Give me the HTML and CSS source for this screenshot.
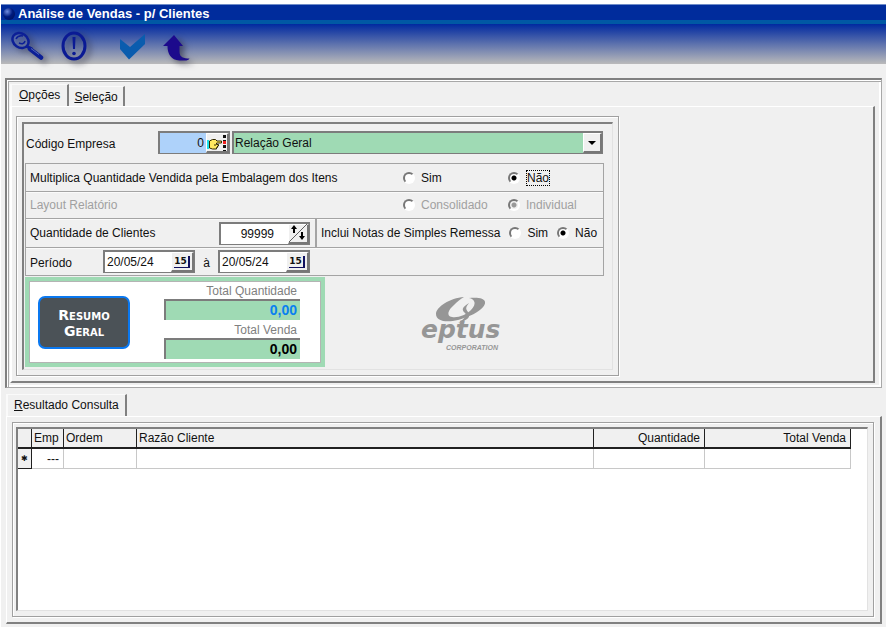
FILE: index.html
```html
<!DOCTYPE html>
<html lang="pt-BR">
<head>
<meta charset="utf-8">
<title>Análise de Vendas - p/ Clientes</title>
<link rel="stylesheet" href="styles.css">
</head>
<body>
<div class="window">
  <header>
    <div class="titlebar">
      <span class="orb"></span>
      <h1>Análise de Vendas - p/ Clientes</h1>
    </div>
    <div class="toolbar">
      <button type="button" class="tool tool-search" aria-label="Pesquisar">
        <svg width="40" height="40" viewBox="0 0 40 40">
          <ellipse cx="9.500" cy="16.500" rx="8.500" ry="7" transform="rotate(35 9.500 16.500)" fill="#8d9ccb" fill-opacity=".25" stroke="#0c1f96" stroke-width="2.500"/>
          <path d="M5 15q2-4 7-3M8 19q5 2 6-2" fill="none" stroke="#0c1f96" stroke-width="1.500"/>
          <path d="M15 22l6 3" fill="none" stroke="#0c1f96" stroke-width="3"/>
          <path d="M19 25l11 8.500" stroke="#0c1f96" stroke-width="4.500" stroke-linecap="round"/>
          <path d="M20 24.500l8 6" stroke="#5567b8" stroke-width="1"/>
        </svg>
      </button>
      <button type="button" class="tool tool-alert" aria-label="Avisos">
        <svg width="40" height="40" viewBox="0 0 40 40">
          <ellipse cx="16" cy="22" rx="11" ry="13" fill="none" stroke="#0a1a94" stroke-width="3"/>
          <path d="M14.500 13h3l-.5 12h-2z" fill="#0a1a94"/>
          <circle cx="16" cy="29.500" r="1.800" fill="#0a1a94"/>
        </svg>
      </button>
      <button type="button" class="tool tool-ok" aria-label="Confirmar">
        <svg width="40" height="40" viewBox="0 0 40 40">
          <path d="M6 15l10 8L31 10v10L15 35.500 6 25z" fill="#0a5cae"/>
        </svg>
      </button>
      <button type="button" class="tool tool-exit" aria-label="Voltar">
        <svg width="40" height="40" viewBox="0 0 40 40">
          <path d="M14 11L3 22h4.500c0 8 3.500 14 12 14.500h5c3 0 4-.5 5-2-6 0-10-1-10-7V22h3.500z" fill="#1c0a8c"/>
        </svg>
      </button>
    </div>
  </header>

  <main>
    <section class="frame">
      <div class="tabs" role="tablist">
        <button type="button" class="tab active" role="tab" aria-selected="true"><u>O</u>pções</button>
        <button type="button" class="tab" role="tab" aria-selected="false"><u>S</u>eleção</button>
      </div>
      <div class="page">
        <form class="group">
          <div class="sunken">
            <div class="company">
              <label for="empresa">Código Empresa</label>
              <span class="field code">
                <input id="empresa" type="text" value="0">
                <button type="button" class="mini" aria-label="Localizar empresa">
                  <svg width="22" height="18" viewBox="0 0 22 18">
                    <path d="M1 6h2v9h-2z" fill="#20e0e8"/>
                    <path d="M3.500 7l3-1.500h3l1.500 1.500h4.500v2h-5v1.500h2v1.500h-1v1.500h-1v1.500h-4l-3-1z" fill="#ffe860" stroke="#302800"/>
                    <path d="M8 11h2" stroke="#302800"/>
                    <path d="M18.500 1v16" stroke="#101010" stroke-width="3" stroke-dasharray="3 2"/>
                    <path d="M17 7h3v3h-3z" fill="#f02020"/>
                  </svg>
                </button>
              </span>
              <span class="field combo">
                <select aria-label="Empresa"><option>Relação Geral</option></select>
                <span class="mini arrow"><svg width="8" height="4" viewBox="0 0 8 4"><path d="M0 0h8L4 4z"/></svg></span>
              </span>
            </div>

            <div class="rows">
              <div class="row choices" role="radiogroup" aria-labelledby="l-mult">
                <span id="l-mult">Multiplica Quantidade Vendida pela Embalagem dos Itens</span>
                <label><input type="radio" name="mult">Sim</label>
                <label><input type="radio" name="mult" checked><span class="focus">Não</span></label>
              </div>
              <div class="row choices off" role="radiogroup" aria-labelledby="l-lay">
                <span id="l-lay">Layout Relatório</span>
                <label><input type="radio" name="lay" disabled>Consolidado</label>
                <label><input type="radio" name="lay" disabled checked>Individual</label>
              </div>
              <div class="row split">
                <div class="amount">
                  <label for="qtd">Quantidade de Clientes</label>
                  <span class="field number">
                    <input id="qtd" type="text" value="99999">
                    <button type="button" class="mini" aria-label="Ajustar quantidade">
                      <svg width="18" height="18" viewBox="0 0 18 18">
                        <path d="M0 18L18 0" stroke="#606060"/>
                        <path d="M2 5l3-4 3 4H6v4H4V5zM10 12l3 4 3-4h-2V8h-2v4z"/>
                      </svg>
                    </button>
                  </span>
                </div>
                <div class="notes" role="radiogroup" aria-labelledby="l-not">
                  <span id="l-not">Inclui Notas de Simples Remessa</span>
                  <label><input type="radio" name="not">Sim</label>
                  <label><input type="radio" name="not" checked>Não</label>
                </div>
              </div>
              <div class="row period">
                <label for="de">Período</label>
                <span class="field date">
                  <input id="de" type="text" value="20/05/24">
                  <button type="button" class="mini" aria-label="Calendário inicial"><span class="cal">15</span></button>
                </span>
                <label for="ate" class="to">à</label>
                <span class="field date">
                  <input id="ate" type="text" value="20/05/24">
                  <button type="button" class="mini" aria-label="Calendário final"><span class="cal">15</span></button>
                </span>
              </div>
            </div>

            <div class="bottom">
              <div class="summary">
                <button type="button" class="resume">Resumo<br>Geral</button>
                <div class="totals">
                  <label for="tq">Total Quantidade</label>
                  <input id="tq" class="blue" type="text" value="0,00" readonly>
                  <label for="tv">Total Venda</label>
                  <input id="tv" type="text" value="0,00" readonly>
                </div>
              </div>
              <svg class="logo" width="84" height="56" viewBox="0 0 84 56" role="img" aria-label="eptus corporation">
                <g fill="#969696">
                  <path fill-rule="evenodd" d="M44 2C30 3 16 12 16 19c0 7 10 9 22 6C53 21 66 13 65 7c0-4-8-5-16-4C55 4 57 9 51 15c-5 5-13 8-19 7-6-1-4-7 2-12 3-3 6-6 10-8z"/>
                  <path d="M49 8c-8 5-7 7-4 10 2 2 0 6-7 10 11-3 13-7 10-11-2-3-3-4 1-9z"/>
                  <text x="1" y="43" class="logo-name">eptus</text>
                  <text x="26" y="55" class="logo-sub">CORPORATION</text>
                </g>
              </svg>
            </div>
          </div>
        </form>
      </div>
    </section>

    <section class="results">
      <div class="tabs" role="tablist">
        <button type="button" class="tab active" role="tab" aria-selected="true"><u>R</u>esultado Consulta</button>
      </div>
      <div class="page">
        <div class="group">
          <div class="sunken grid-box">
            <table>
              <colgroup><col class="c-mark"><col class="c-emp"><col class="c-ord"><col><col class="c-qty"><col class="c-total"></colgroup>
              <thead>
                <tr><th></th><th>Emp</th><th>Ordem</th><th>Razão Cliente</th><th class="num">Quantidade</th><th class="num">Total Venda</th></tr>
              </thead>
              <tbody>
                <tr><th class="mark">✱</th><td class="num">---</td><td></td><td></td><td></td><td></td></tr>
              </tbody>
            </table>
          </div>
        </div>
      </div>
    </section>
  </main>
</div>
</body>
</html>
```

FILE: styles.css
```css
* { box-sizing: border-box; }

body {
  margin: 0;
  background: #fff;
  color: #111;
  font: 12px/16px "Liberation Sans", Arial, sans-serif;
}

button, input, select {
  margin: 0;
  padding: 0;
  border: 0;
  border-radius: 0;
  background: none;
  color: inherit;
  font: inherit;
}

.window {
  display: flex;
  flex-direction: column;
  min-height: 100vh;
  padding: 4px 0 0 1px;
}

/* header */
.titlebar {
  display: flex;
  align-items: center;
  gap: 3px;
  height: 20px;
  padding: 0 0 1px 2px;
  border-top: 1px solid #6f8cc8;
  background: linear-gradient(#002c9c 15px, #0058a4 15px);
}

h1 {
  margin: 0;
  color: #fff;
  font-size: 13px;
  line-height: 16px;
}

.orb {
  width: 12px;
  height: 12px;
  border-radius: 50%;
  background: radial-gradient(circle at 35% 30%, #6f8ce0, #001c80 45%, #000c50);
}

.toolbar {
  display: flex;
  height: 40px;
  background: linear-gradient(#0029a0, #bababa);
}

.tool {
  width: 40px;
  height: 40px;
  filter: drop-shadow(4px 3px 3px rgba(40, 40, 60, .6));
}
.tool svg { display: block; }
.tool-search { margin-left: 10px; }
.tool-alert { margin-left: 7px; }
.tool-ok { margin-left: 16px; filter: none; }
.tool-exit { margin-left: 6px; }

/* framing */
main {
  display: flex;
  flex: 1;
  flex-direction: column;
  padding: 14px 4px 3px;
  background: #f0f0f0;
}

.frame {
  padding: 4px 6px 4px 3px;
  border: solid #808080;
  border-width: 2px 1px 1px 2px;
  border-right-color: #a8a8a8;
  border-bottom-color: #a8a8a8;
  box-shadow: inset 1px 1px #fff, inset 2px 2px #a8a8a8, inset -2px -2px #fff;
}

.tabs {
  display: flex;
  align-items: flex-end;
  height: 22px;
}

.tab {
  height: 20px;
  padding: 0 5px;
  border: solid #fafafa;
  border-width: 1px 2px 0 0;
  border-right-color: #808080;
  line-height: 20px;
}

.tab.active {
  height: 22px;
  padding: 0 7px 2px;
  border-left: 2px solid #fafafa;
}

.page {
  padding: 9px 5px 5px 4px;
  border: solid #808080;
  border-width: 1px 2px 2px;
  border-top-color: #fff;
  border-left-color: #fff;
}

.group {
  padding: 5px;
  border: 1px solid #a0a0a0;
  box-shadow: inset 1px 1px #fff, 1px 1px #fff;
}

.frame .group { max-width: 603px; }

.sunken {
  padding: 0 8px 2px 1px;
  border: solid #808080;
  border-width: 2px 1px 1px 2px;
  border-right-color: #e2e2e2;
  border-bottom-color: #e2e2e2;
}

/* fields */
.field {
  display: flex;
  height: 23px;
  border: solid #7c7c7c;
  border-width: 2px 1px 1px 2px;
  background: #fff;
}

.field input, .field select {
  flex: 1;
  min-width: 0;
  outline: 0;
  appearance: none;
}

.mini {
  display: flex;
  align-items: center;
  justify-content: center;
  width: 23px;
  border: solid #777;
  border-width: 1px 2px 2px 1px;
  border-top-color: #fff;
  border-left-color: #fff;
  background: #f0f0f0;
}
.mini svg { display: block; flex: none; }

.company {
  display: flex;
  align-items: center;
  gap: 2px;
  padding: 7px 1px 9px;
}
.company label { width: 130px; padding-top: 3px; }
.code { width: 72px; background: #aed2fa; }
.code input { padding-right: 2px; text-align: right; }
.combo { flex: 1; background: #9fdab4; }
.combo select { padding-left: 1px; }
.combo .arrow { width: 19px; pointer-events: none; }

.rows { border: 1px solid #a4a4a4; }
.row {
  display: flex;
  align-items: center;
  height: 27px;
  padding-left: 4px;
}
.row + .row { border-top: 1px solid #a4a4a4; box-shadow: inset 0 1px #fafafa; }

.choices { display: grid; grid-template-columns: 373px 105px 1fr; }
.choices label, .notes label { display: flex; align-items: center; gap: 6px; }
.off { color: #a0a0a0; }

input[type="radio"] {
  width: 12px;
  height: 12px;
  border: 2px solid #fff;
  border-top-color: #777;
  border-left-color: #777;
  border-radius: 50%;
  background: #fff;
  appearance: none;
}
input[type="radio"]:checked { background: radial-gradient(circle, #000 2px, #fff 3px); }
input[type="radio"]:disabled:checked { background: radial-gradient(circle, #999 2px, #f0f0f0 3px); }

.focus { outline: 1px dotted #000; outline-offset: -1px; padding: 0 1px; }

.split { height: 29px; }
.amount {
  display: flex;
  flex: none;
  align-items: center;
  justify-content: space-between;
  width: 287px;
  height: 100%;
  padding-right: 5px;
  border-right: 2px solid #a4a4a4;
}
.number { width: 91px; }
.number input { padding-right: 14px; text-align: right; }
.number .mini { width: 21px; }
.notes { display: flex; align-items: center; gap: 9px; padding-left: 4px; }

.period { height: 28px; }
.period label:first-child { width: 73px; padding-top: 3px; }
.to { width: 23px; padding-top: 3px; text-align: center; }
.date { width: 92px; }
.date input { padding-left: 2px; }
.cal {
  border: solid #101060;
  border-width: 0 2px 1px 0;
  padding-right: 1px;
  font: bold 9px/11px "DejaVu Sans", sans-serif;
}

/* totals */
.bottom { display: flex; padding-top: 1px; }
.summary {
  display: flex;
  justify-content: space-between;
  width: 300px;
  height: 90px;
  padding: 4px 20px 0 9px;
  border: solid #9fdab4;
  border-width: 4px 5px 5px 4px;
  outline: 1px solid #b4b4b4;
  outline-offset: -5px;
  background: #fff;
}
.resume {
  width: 92px;
  height: 53px;
  margin-top: 11px;
  border: 2px solid #0a78f0;
  border-radius: 7px;
  background: #4b5257;
  color: #fff;
  font: bold small-caps 14px/16px "DejaVu Sans", sans-serif;
}
.totals {
  display: flex;
  flex-direction: column;
  width: 136px;
  color: #808080;
  text-align: right;
}
.totals label { height: 16px; padding-right: 3px; line-height: 16px; }
.totals label:first-child { margin-top: -2px; }
.totals input {
  width: 100%;
  height: 21px;
  margin-bottom: 2px;
  padding: 0 3px 1px 0;
  border: solid #7c7c7c;
  border-width: 2px 0 0 2px;
  background: #9fdab4;
  color: #000;
  font: bold 14px/16px "Liberation Sans", Arial, sans-serif;
  text-align: right;
}
.totals input.blue { color: #0a80f0; }

.logo { margin: 18px 0 0 95px; }
.logo-name { font: italic bold 25px "DejaVu Sans", sans-serif; }
.logo-sub { font: italic bold 7px "Liberation Sans", sans-serif; }

/* results */
.results {
  display: flex;
  flex: 1;
  flex-direction: column;
  margin: 6px 0 0 1px;
}
.results .tab.active { padding: 0 6px 2px; }
.results .page {
  display: flex;
  flex: 1;
  padding: 5px 6px 5px 5px;
  border-left-width: 1px;
}
.results .group {
  display: flex;
  flex: 1;
  padding: 4px 5px 5px 3px;
}
.grid-box { flex: 1; padding: 0 16px 0 0; background: #fff; }

table {
  width: 100%;
  table-layout: fixed;
  border-collapse: separate;
  border-spacing: 0;
}
th, td {
  height: 20px;
  padding: 0 2px;
  border: solid #c8c8c8;
  border-width: 0 1px 1px 0;
  font-weight: normal;
  line-height: 16px;
  text-align: left;
}
th {
  border-color: #202020;
  background: #f0f0f0;
}
thead th { border-bottom-width: 2px; }
th.num, td.num { padding-right: 4px; text-align: right; }
th.mark { padding: 0; font-size: 8px; text-align: center; }
.c-mark { width: 14px; }
.c-emp { width: 32px; }
.c-ord { width: 73px; }
.c-qty { width: 111px; }
.c-total { width: 146px; }
```
